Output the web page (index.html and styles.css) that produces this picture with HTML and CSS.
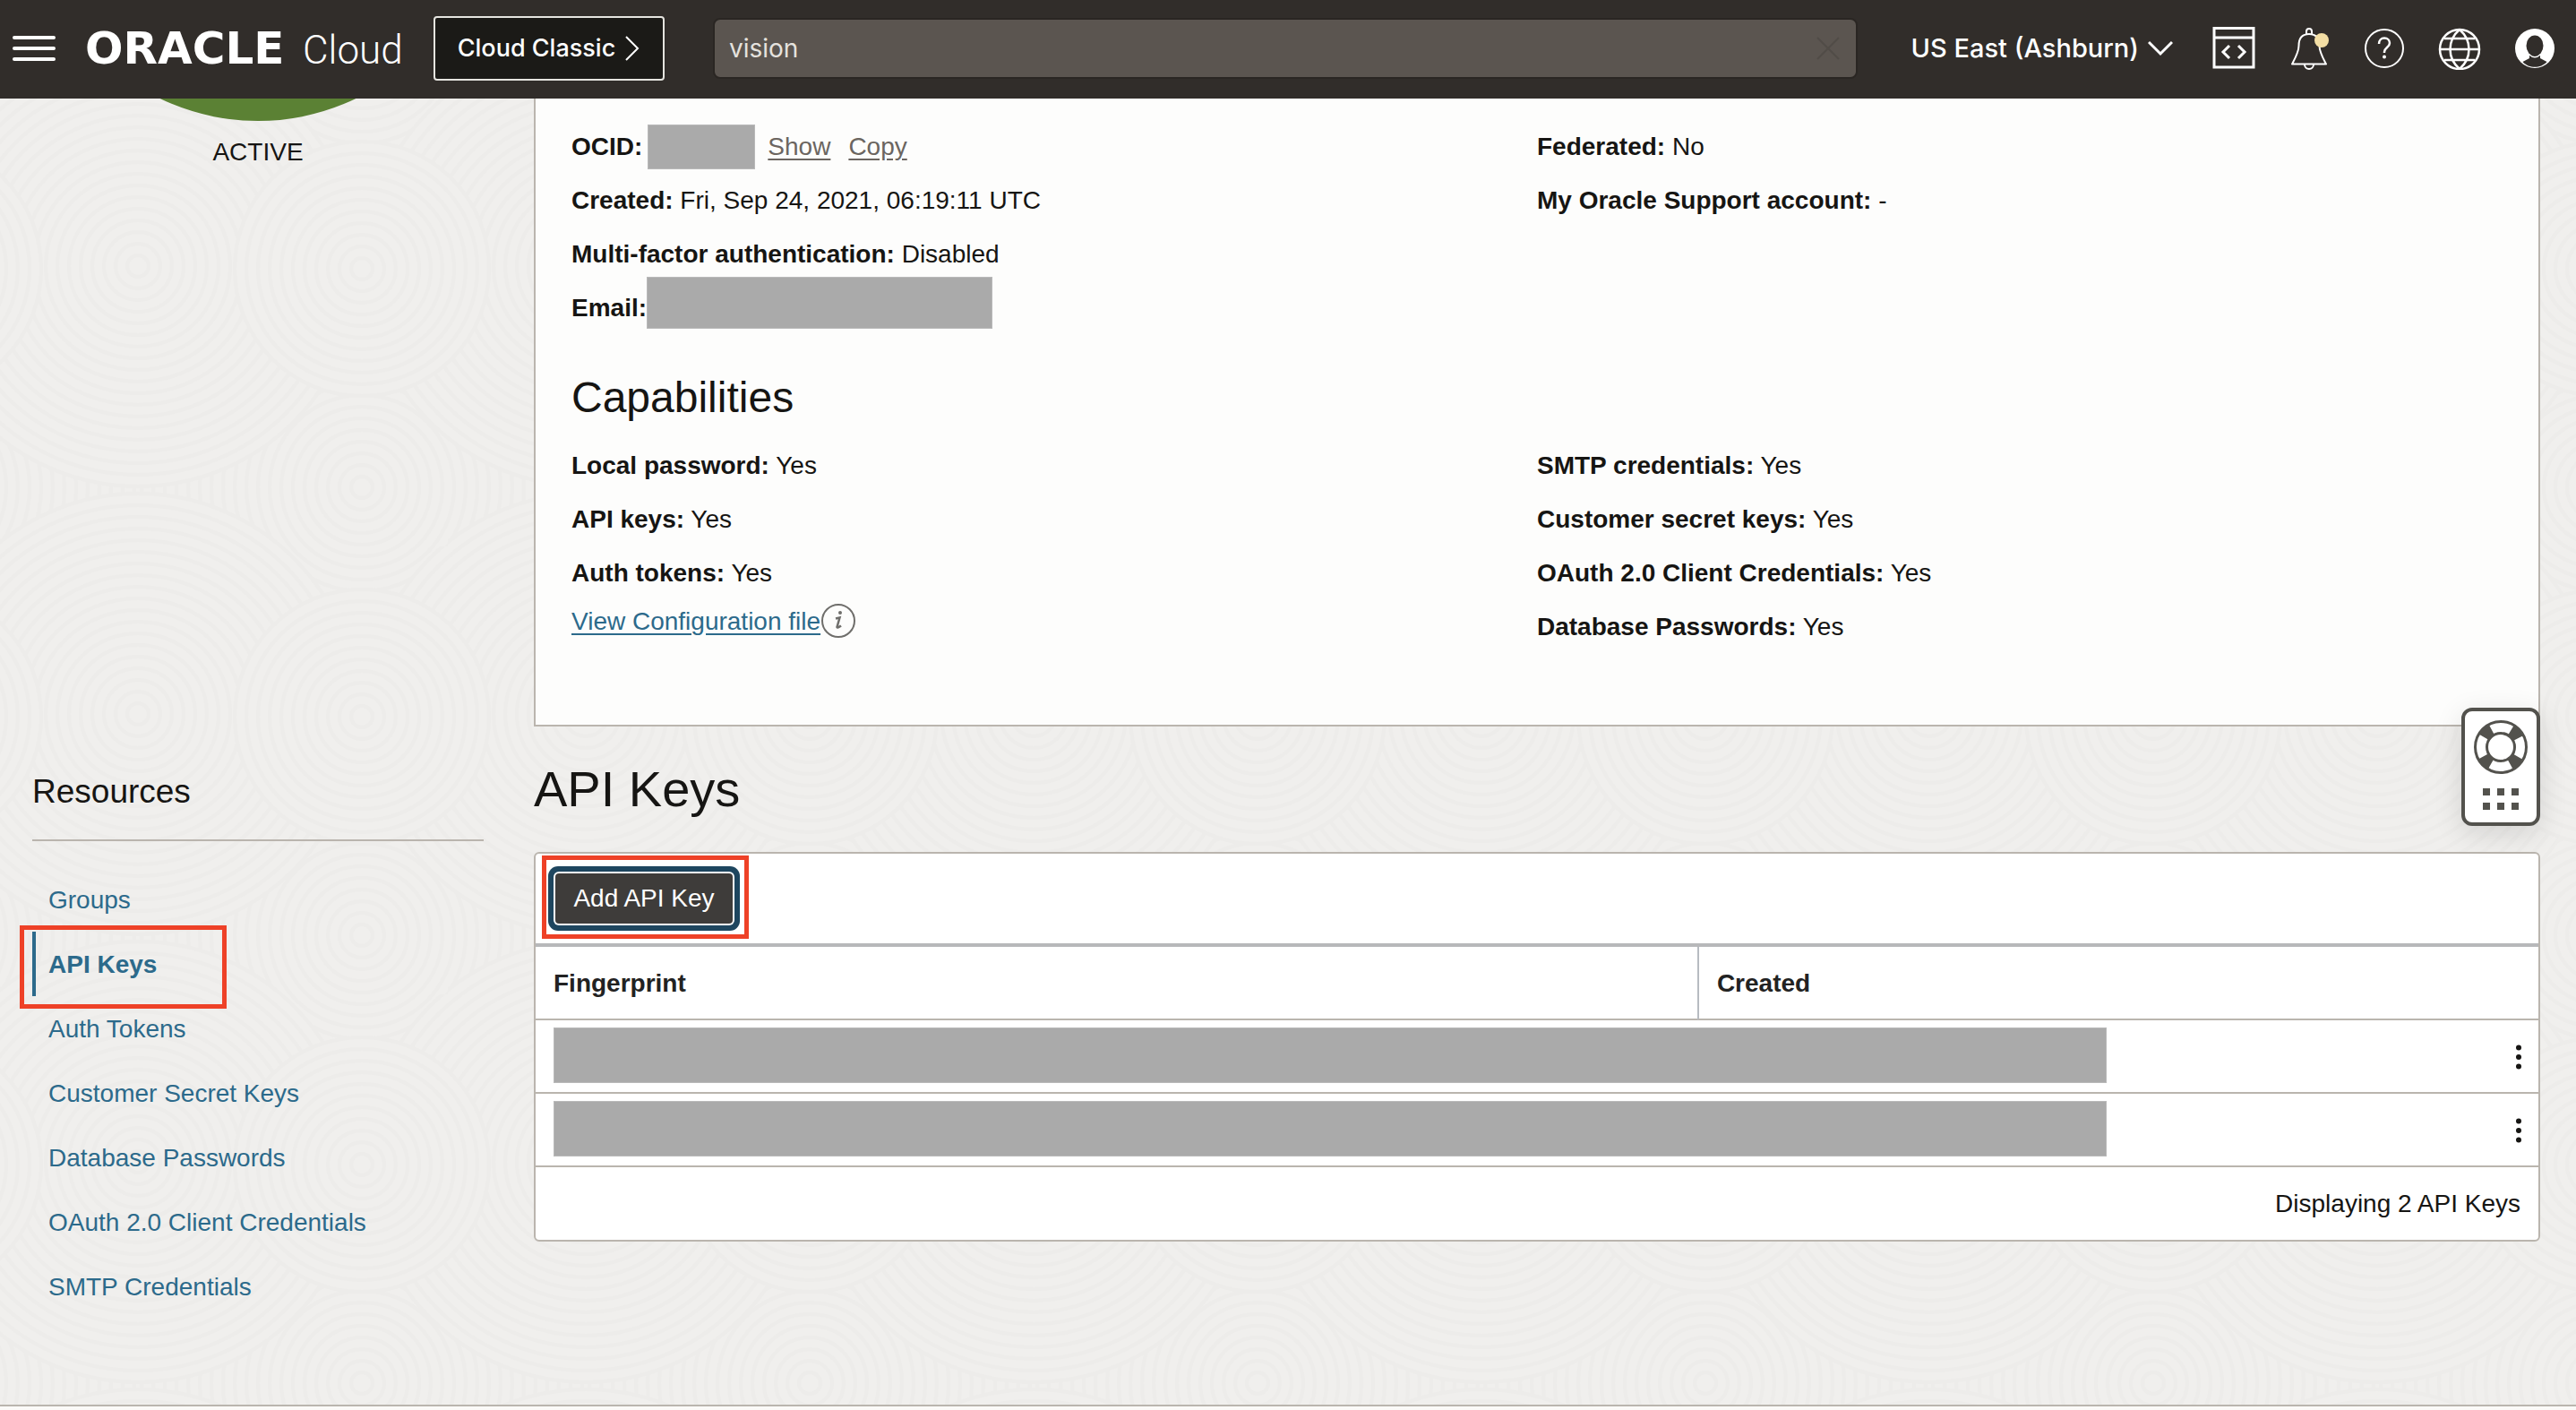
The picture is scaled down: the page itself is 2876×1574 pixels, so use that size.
FILE: index.html
```html
<!DOCTYPE html>
<html lang="en">
<head>
<meta charset="utf-8">
<title>User Details | Oracle Cloud</title>
<link rel="stylesheet" href="styles.css">
</head>
<body>
<header class="topbar">
  <button class="icon-btn menu-btn" aria-label="Menu">
    <svg width="48" height="28" viewBox="0 0 48 28"><path d="M2 2H46M2 14H46M2 26H46" stroke="#fff" stroke-width="4" stroke-linecap="round"/></svg>
  </button>
  <a class="logo" href="#"><span class="logo-brand">ORACLE</span><span class="logo-product">Cloud</span></a>
  <button class="classic-btn">Cloud Classic
    <svg width="18" height="30" viewBox="0 0 18 30"><path d="M2 2L15 15L2 28" fill="none" stroke="#fff" stroke-width="2"/></svg>
  </button>
  <div class="search">
    <input type="text" value="vision" aria-label="Search">
    <button class="icon-btn" aria-label="Clear search">
      <svg width="26" height="26" viewBox="0 0 26 26"><path d="M1 1L25 25M25 1L1 25" stroke="#514c47" stroke-width="2"/></svg>
    </button>
  </div>
  <button class="region-btn">US East (Ashburn)
    <svg width="28" height="18" viewBox="0 0 28 18"><path d="M1 2L14 15L27 2" fill="none" stroke="#fff" stroke-width="3"/></svg>
  </button>
  <nav class="tools" aria-label="Tools">
    <button class="icon-btn" aria-label="Developer tools">
      <svg width="48" height="48" viewBox="0 0 48 48" fill="none" stroke="#fff" stroke-width="2"><path d="M2 1.500H46V45H2Z" stroke-width="3"/><path d="M2 12H46" stroke-width="3"/><path d="M19 21L12 28L19 35M29 21L36 28L29 35" stroke-width="3"/></svg>
    </button>
    <button class="icon-btn" aria-label="Notifications">
      <svg width="48" height="48" viewBox="0 0 48 48" fill="none" stroke="#fff" stroke-width="2"><path d="M21 8V5a3 3 0 0 1 6 0V8M5 41.500C9 34 12.500 28 12.500 21C12.500 12 16 8 24 8S35.500 12 35.500 21C35.500 28 39 34 43 41.500Z" stroke-linejoin="round"/><path d="M19 42a5 5 0 0 0 10 0"/><circle cx="38" cy="15" r="8" fill="#f3dea4" stroke="none"/></svg>
    </button>
    <button class="icon-btn" aria-label="Help">
      <svg width="48" height="48" viewBox="0 0 48 48" fill="none" stroke="#fff" stroke-width="2"><circle cx="24" cy="24" r="21"/><path d="M18 19c0-4 2.500-6.500 6-6.500s6 2.300 6 5.500c0 5-6 5-6 10v1" stroke-width="2.500"/><circle cx="24" cy="33.500" r="2" fill="#fff" stroke="none"/></svg>
    </button>
    <button class="icon-btn" aria-label="Language">
      <svg width="48" height="48" viewBox="0 0 48 48" fill="none" stroke="#fff" stroke-width="2.500"><circle cx="24" cy="25" r="22"/><path d="M24 3C10 15 10 35 24 47C38 35 38 15 24 3M2 25H46M7 13H41M7 37H41"/></svg>
    </button>
    <button class="icon-btn" aria-label="Profile">
      <svg width="48" height="48" viewBox="0 0 48 48"><circle cx="24" cy="24" r="22" fill="#fff"/><ellipse cx="24" cy="21" rx="9.500" ry="11.500" fill="#312d2a"/><path d="M10.500 39L18 35V31h12v4l7.500 4C34 43 29 44.800 24 44.800S14 43 10.500 39Z" fill="#312d2a"/><path d="M18 31Q24 36.500 30 31" fill="none" stroke="#fff" stroke-width="1.500"/></svg>
    </button>
  </nav>
</header>

<main class="page">
  <svg class="backdrop" aria-hidden="true">
    <defs>
      <g id="rings">
        <circle r="246"/><circle r="233"/><circle r="220"/><circle r="207"/><circle r="194"/><circle r="181"/><circle r="168"/><circle r="155"/><circle r="142"/><circle r="129"/><circle r="116"/><circle r="103"/><circle r="90"/><circle r="77"/><circle r="64"/><circle r="51"/><circle r="38"/><circle r="25"/><circle r="12"/>
      </g>
      <g id="small-rings">
        <circle r="142"/><circle r="129"/><circle r="116"/><circle r="103"/><circle r="90"/><circle r="77"/><circle r="64"/><circle r="51"/><circle r="38"/><circle r="25"/><circle r="12"/>
      </g>
      <pattern id="swirl" width="500" height="500" patternUnits="userSpaceOnUse">
        <g fill="#f0efed" stroke="#edecea" stroke-width="4">
          <rect width="500" height="500" stroke="none"/>
          <use href="#rings" x="404" y="-66"/><use href="#rings" x="-96" y="-66"/><use href="#rings" x="404" y="434"/><use href="#rings" x="-96" y="434"/>
          <use href="#rings" x="154" y="187"/><use href="#rings" x="654" y="187"/><use href="#rings" x="154" y="-313"/><use href="#rings" x="154" y="687"/>
          <use href="#small-rings" x="404" y="190"/><use href="#small-rings" x="-96" y="190"/>
        </g>
      </pattern>
    </defs>
    <rect width="100%" height="100%" fill="url(#swirl)"/>
  </svg>

  <div class="layout">
    <div class="status">
      <div class="status-clip"><div class="status-circle"></div></div>
      <p class="status-label">ACTIVE</p>
    </div>

    <section class="panel">
      <div class="columns">
        <div>
          <p class="row"><b>OCID:</b><span class="redacted redacted-ocid"></span><a class="quiet" href="#">Show</a><a class="quiet" href="#">Copy</a></p>
          <p class="row"><b>Created:</b> Fri, Sep 24, 2021, 06:19:11 UTC</p>
          <p class="row"><b>Multi-factor authentication:</b> Disabled</p>
          <p class="row"><b>Email:</b><span class="redacted redacted-email"></span></p>
        </div>
        <div>
          <p class="row"><b>Federated:</b> No</p>
          <p class="row"><b>My Oracle Support account:</b> -</p>
        </div>
      </div>
      <h2>Capabilities</h2>
      <div class="columns">
        <div>
          <p class="row"><b>Local password:</b> Yes</p>
          <p class="row"><b>API keys:</b> Yes</p>
          <p class="row"><b>Auth tokens:</b> Yes</p>
          <p class="config"><a href="#">View Configuration file</a><svg width="40" height="40" viewBox="0 0 40 40"><circle cx="20" cy="19" r="18" fill="none" stroke="#6f6e6b" stroke-width="2"/><circle cx="22" cy="10" r="2" fill="#6f6e6b"/><path d="M17 16.500L21.500 15.500L18.500 26Q19 27.500 23 24.500" fill="none" stroke="#6f6e6b" stroke-width="2.500"/></svg></p>
        </div>
        <div>
          <p class="row"><b>SMTP credentials:</b> Yes</p>
          <p class="row"><b>Customer secret keys:</b> Yes</p>
          <p class="row"><b>OAuth 2.0 Client Credentials:</b> Yes</p>
          <p class="row"><b>Database Passwords:</b> Yes</p>
        </div>
      </div>
    </section>

    <aside class="resources">
      <h3>Resources</h3>
      <nav aria-label="Resources">
        <a href="#">Groups</a>
        <a class="current" href="#">API Keys</a>
        <a href="#">Auth Tokens</a>
        <a href="#">Customer Secret Keys</a>
        <a href="#">Database Passwords</a>
        <a href="#">OAuth 2.0 Client Credentials</a>
        <a href="#">SMTP Credentials</a>
      </nav>
    </aside>

    <section class="keys">
      <h1>API Keys</h1>
      <div class="card">
        <div class="toolbar"><span class="highlight"><button class="add-btn">Add API Key</button></span></div>
        <table>
          <colgroup><col class="col-fingerprint"><col><col class="col-actions"></colgroup>
          <thead><tr><th scope="col">Fingerprint</th><th scope="col" colspan="2">Created</th></tr></thead>
          <tbody>
            <tr>
              <td colspan="2"><div class="redacted redacted-key"></div></td>
              <td class="actions"><button class="icon-btn" aria-label="Actions"><svg width="8" height="28" viewBox="0 0 8 28" fill="#161513"><circle cx="4" cy="3.500" r="3"/><circle cx="4" cy="14" r="3"/><circle cx="4" cy="24.500" r="3"/></svg></button></td>
            </tr>
            <tr>
              <td colspan="2"><div class="redacted redacted-key"></div></td>
              <td class="actions"><button class="icon-btn" aria-label="Actions"><svg width="8" height="28" viewBox="0 0 8 28" fill="#161513"><circle cx="4" cy="3.500" r="3"/><circle cx="4" cy="14" r="3"/><circle cx="4" cy="24.500" r="3"/></svg></button></td>
            </tr>
          </tbody>
        </table>
        <p class="count">Displaying 2 API Keys</p>
      </div>
      <button class="support" aria-label="Support">
        <svg width="60" height="60" viewBox="0 0 60 60" fill="none" stroke="#53524d"><circle cx="30" cy="30" r="22" stroke-width="12" stroke-dasharray="12 22.560" stroke-dashoffset="-11.280"/><circle cx="30" cy="30" r="28.500" stroke-width="3"/><circle cx="30" cy="30" r="15.500" stroke-width="3"/></svg>
        <svg width="40" height="24" viewBox="0 0 40 24" fill="#53524d"><path d="M0 0h8v8H0zM16 0h8v8h-8zM32 0h8v8h-8zM0 16h8v8H0zM16 16h8v8h-8zM32 16h8v8h-8z"/></svg>
      </button>
    </section>
  </div>
</main>
<footer class="footer"></footer>
</body>
</html>
```

FILE: styles.css
```css
*,
*::after {
  box-sizing: border-box;
}

body {
  display: flex;
  flex-direction: column;
  min-height: 100vh;
  margin: 0;
  background: #fbfaf8;
  color: #161513;
  font: 28px/60px "Liberation Sans", Arial, sans-serif;
}

h1,
h2,
h3,
p {
  margin: 0;
  font-weight: 400;
}

button {
  padding: 0;
  font: inherit;
  color: inherit;
  cursor: pointer;
}

svg {
  display: block;
  flex: none;
}

a {
  color: #2c6a8b;
}

.icon-btn {
  border: 0;
  background: none;
}

/* Top bar */

.topbar {
  display: flex;
  align-items: center;
  height: 110px;
  padding: 0 22px 2px 14px;
  background: #312d2a;
  color: #fff;
  font-family: Inter, sans-serif;
  font-weight: 500;
}

.logo {
  display: flex;
  align-items: baseline;
  width: 388px;
  padding-left: 33px;
  color: #fff;
  text-decoration: none;
}

.logo-brand {
  width: 243px;
  font: 700 50px "DejaVu Sans", sans-serif;
}

.logo-product {
  font: 300 44px Roboto, sans-serif;
}

.classic-btn {
  display: flex;
  align-items: center;
  justify-content: center;
  gap: 10px;
  width: 258px;
  height: 72px;
  margin: 0 54px 0 34px;
  border: 2px solid #e5e4df;
  border-radius: 4px;
  background: #1b1a17;
  font-size: 27px;
}

.search {
  display: flex;
  flex: 1;
  align-items: center;
  height: 68px;
  padding: 0 18px 0 14px;
  border: 2px solid #2a2623;
  border-radius: 8px;
  background: #5b5550;
}

.search input {
  flex: 1;
  padding: 0 2px;
  border: 0;
  background: none;
  color: #e5e2de;
  font: inherit;
  font-weight: 400;
}

.region-btn {
  display: flex;
  align-items: center;
  gap: 10px;
  margin: 0 44px 0 60px;
  border: 0;
  background: none;
  font-size: 29px;
}

.tools {
  display: flex;
  gap: 36px;
}

/* Page body */

.page {
  position: relative;
  flex: 1;
}

.backdrop {
  position: absolute;
  inset: 0;
  width: 100%;
  height: 100%;
}

.layout {
  position: relative;
  display: grid;
  grid-template-columns: 504px 1fr;
  gap: 30px 56px;
  padding: 0 40px 80px 36px;
}

.status {
  text-align: center;
}

.status-clip {
  display: flex;
  align-items: flex-end;
  height: 25px;
  overflow: hidden;
}

.status-circle {
  flex: none;
  width: 504px;
  height: 504px;
  border-radius: 50%;
  background: #5b8134;
}

.status-label {
  padding-top: 5px;
}

.panel {
  padding: 24px 40px 79px;
  border: 2px solid #bab5ae;
  border-top: 0;
  background: #fdfdfc;
}

.columns {
  display: grid;
  grid-template-columns: 1fr 1fr;
}

.row {
  display: flex;
  align-items: center;
  height: 60px;
  white-space: pre;
}

.panel h2 {
  margin: 40px 0 16px;
  font-size: 48px;
}

.quiet {
  margin-left: 14px;
  color: #6b6560;
  text-underline-offset: 4px;
}

.quiet + .quiet {
  margin-left: 20px;
}

.config {
  display: flex;
  align-items: center;
  height: 48px;
}

.config a {
  text-underline-offset: 4px;
}

.redacted {
  background: #aaa;
  border: 1px solid #b9b9b9;
}

.redacted-ocid {
  width: 120px;
  height: 50px;
  margin-left: 6px;
}

.redacted-email {
  width: 386px;
  height: 58px;
  margin-bottom: 12px;
}

.redacted-key {
  width: 1734px;
  max-width: 100%;
  height: 62px;
}

/* Resources navigation */

.resources h3 {
  padding-bottom: 10px;
  border-bottom: 2px solid #bab5ae;
  font-size: 37px;
  line-height: 86px;
}

.resources nav {
  display: flex;
  flex-direction: column;
  padding-top: 29px;
}

.resources a {
  height: 72px;
  padding-left: 18px;
  line-height: 74px;
  text-decoration: none;
}

.resources .current {
  position: relative;
  padding-left: 14px;
  border-left: 4px solid #2c6a8b;
  font-weight: 700;
}

.resources .current::after {
  content: "";
  position: absolute;
  top: -7px;
  left: -18px;
  width: 231px;
  height: 93px;
  border: 5px solid #ee4127;
}

/* API keys table */

.keys {
  position: relative;
}

.keys h1 {
  margin-bottom: 30px;
  font-size: 56px;
  line-height: 80px;
}

.card {
  border: 2px solid #bab5ae;
  border-radius: 6px;
  background: #fff;
}

.toolbar {
  height: 104px;
  padding: 2px 7px;
  border-bottom: 4px solid #b7b8ba;
}

.highlight {
  display: flex;
  width: 231px;
  height: 93px;
  padding: 15px 10px;
  border: 5px solid #ee4127;
}

.add-btn {
  width: 198px;
  height: 56px;
  border: 0;
  border-radius: 4px;
  background: #3e3c3a;
  box-shadow: 0 0 0 2px #fff, 0 0 0 8px #1e465f;
  color: #fff;
  line-height: 56px;
}

table {
  width: 100%;
  border-collapse: separate;
  border-spacing: 0;
  table-layout: fixed;
}

.col-fingerprint {
  width: 58%;
}

.col-actions {
  width: 80px;
}

th {
  height: 82px;
  padding: 2px 20px 0;
  border-bottom: 2px solid #bab5ae;
  color: #222;
  text-align: left;
}

th + th {
  border-left: 2px solid #b7bcc1;
}

td {
  height: 82px;
  padding: 8px 20px 10px;
  border-bottom: 2px solid #bab5ae;
  line-height: 1;
}

.actions {
  padding: 10px 18px 8px;
}

.actions .icon-btn {
  display: block;
  margin-left: auto;
}

.count {
  padding: 1px 20px 0;
  line-height: 80px;
  text-align: right;
}

.support {
  position: absolute;
  top: -51px;
  right: 0;
  display: flex;
  flex-direction: column;
  align-items: center;
  gap: 16px;
  width: 88px;
  height: 132px;
  padding-top: 10px;
  border: 4px solid #53524d;
  border-radius: 12px;
  background: #fff;
  box-shadow: 0 8px 32px rgba(0, 0, 0, 0.12);
}

.footer {
  height: 6px;
  border-top: 2px solid #bab5ae;
}
```
